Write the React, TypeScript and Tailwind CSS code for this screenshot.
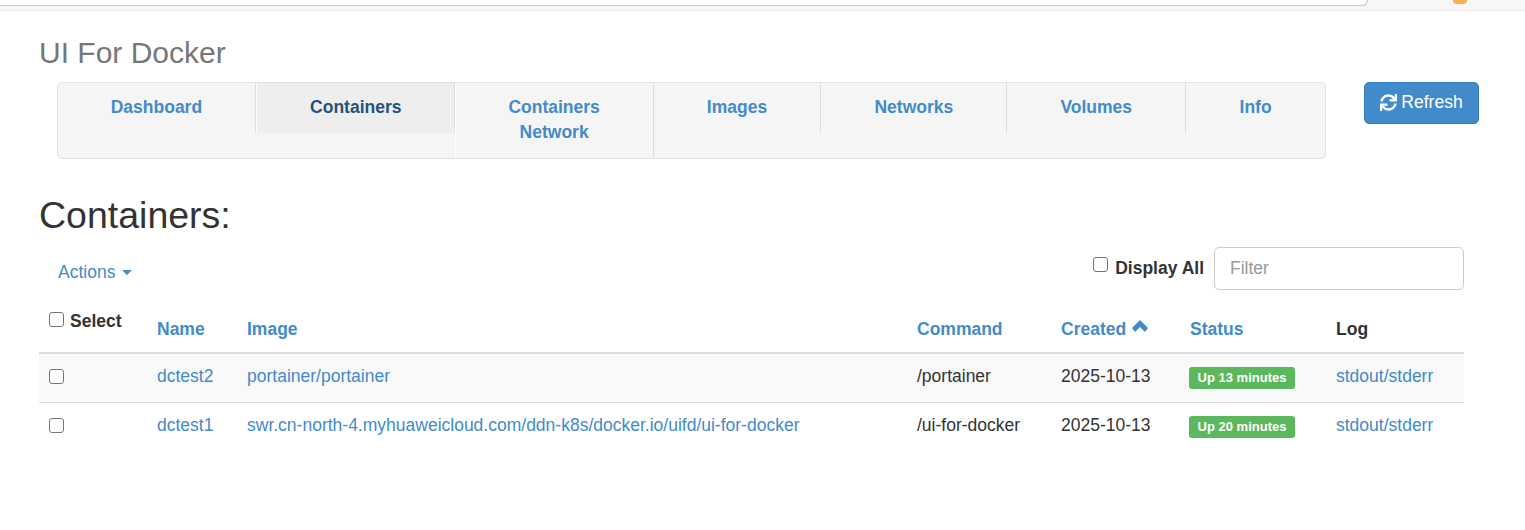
import { FaSync } from "react-icons/fa"

const tabs = [
  { label: "Dashboard", width: "w-[198px]" },
  { label: "Containers", width: "w-[199px]", active: true },
  { label: "Containers Network", width: "w-[199px]", tall: true },
  { label: "Images", width: "w-[168px]" },
  { label: "Networks", width: "w-[186px]" },
  { label: "Volumes", width: "w-[179px]" },
  { label: "Info", width: "w-[139px]" },
]

const rows = [
  { name: "dctest2", image: "portainer/portainer", command: "/portainer", created: "2025-10-13", status: "Up 13 minutes", odd: true },
  { name: "dctest1", image: "swr.cn-north-4.myhuaweicloud.com/ddn-k8s/docker.io/uifd/ui-for-docker", command: "/ui-for-docker", created: "2025-10-13", status: "Up 20 minutes" },
]

const Check = () => <input type="checkbox" className="h-[15px] w-[15px] shrink-0 appearance-none rounded-[3px] border border-[#767676] bg-white" />

const cols = "grid grid-cols-[118px_90px_670px_144px_128px_147px_1fr]"

const App = () => {
  return (
    <div className="h-[530px] overflow-hidden bg-white font-['Liberation_Sans',Arial,sans-serif] text-[17.5px] text-[#333]">
      {/* browser chrome left over at the top of the shot */}
      <div className="flex h-[11px] border-b border-[#eeeeee] bg-[#f7f7f7]">
        <div className="h-[6px] w-[1368px] rounded-br-[14px] border-b border-r border-[#c8c8c8] bg-white" />
        <div className="ml-[85px] h-[4px] w-[14px] rounded-b-[7px] bg-[#f6b04e]" />
      </div>

      <div className="flex flex-col pl-[39px]">
        <h3 className="mt-[23px] h-[48px] text-[30px] leading-[38px] text-[#777]">UI For Docker</h3>

        <div className="flex items-start pl-[18px]">
          <div className="flex h-[77px] w-[1269px] rounded-[5px] border border-[#e3e3e3] bg-[#f5f5f5]">
            {tabs.map((t) => (
              <div
                key={t.label}
                className={`${t.width} border-r border-[#dddddd] pt-[12px] text-center font-bold leading-[25px] last:border-r-0 ${t.tall ? "h-[75px] border-l border-l-white" : "h-[50px]"} ${t.active ? "border-l border-l-white bg-[#eeeeee] pl-[1px] text-[#23527c]" : "text-[#428bca]"}`}
              >
                <div className={t.tall ? "mx-auto w-[110px]" : ""}>{t.label}</div>
              </div>
            ))}
          </div>
          <button className="ml-[38px] flex h-[42px] w-[115px] items-center justify-center gap-[4px] rounded-[5px] border border-[#357ebd] bg-[#428bca] pb-[2px] text-white">
            <FaSync className="h-[17px] w-[17px]" />
            Refresh
          </button>
        </div>

        <h1 className="mb-[7px] mt-[33px] text-[37.5px] leading-[46px] text-[#333]">Containers:</h1>

        <div className="mt-[1px] flex w-[1425px] items-start justify-between">
          <div className="mt-[13px] flex items-center gap-[7px] pl-[19px] text-[#428bca]">
            Actions
            <span className="h-0 w-0 border-x-[5px] border-t-[5px] border-x-transparent border-t-[#428bca]" />
          </div>
          <div className="mt-[1px] flex items-center">
            <span className="-mt-[8px] flex"><Check /></span>
            <span className="ml-[7px] font-bold">Display All</span>
            <input
              placeholder="Filter"
              className="ml-[10px] h-[43px] w-[250px] rounded-[5px] border border-[#cccccc] px-[15px] placeholder:text-[#999] focus:outline-none"
            />
          </div>
        </div>

        <div className="mt-[10px] w-[1425px]">
          <div className={`${cols} h-[54px] border-b-2 border-[#dddddd] font-bold`}>
            <div className="flex h-[35px] items-center gap-[6px] pl-[10px] pt-[7px] text-[#333]">
              <span className="-mt-[3px] flex"><Check /></span>
              Select
            </div>
            <div className="pt-[16px] text-[#428bca]">Name</div>
            <div className="pt-[16px] text-[#428bca]">Image</div>
            <div className="pt-[16px] text-[#428bca]">Command</div>
            <div className="flex items-start gap-[6px] pt-[16px] text-[#428bca]">
              Created
              <svg viewBox="0 0 16 12" className="mt-[4px] h-[12px] w-[16px] fill-current">
                <path d="M8 0 L16 8 L13 12 L8 7 L3 12 L0 8 Z" />
              </svg>
            </div>
            <div className="pl-[1px] pt-[16px] text-[#428bca]">Status</div>
            <div className="pt-[16px] text-[#333]">Log</div>
          </div>
          {rows.map((r) => (
            <div key={r.name} className={`${cols} h-[49px] items-center border-b border-[#dddddd] pb-[4px] last:border-b-transparent ${r.odd ? "bg-[#f9f9f9]" : ""}`}>
              <div className="flex pl-[10px]"><Check /></div>
              <a className="text-[#428bca]">{r.name}</a>
              <a className="text-[#428bca]">{r.image}</a>
              <div>{r.command}</div>
              <div>{r.created}</div>
              <div className="mt-[4px]">
                <span className="block w-[106px] rounded-[3px] bg-[#5cb85c] py-[3px] text-center text-[13px] font-bold leading-[16px] text-white">{r.status}</span>
              </div>
              <a className="text-[#428bca]">stdout/stderr</a>
            </div>
          ))}
        </div>
      </div>
    </div>
  )
}

export default App
